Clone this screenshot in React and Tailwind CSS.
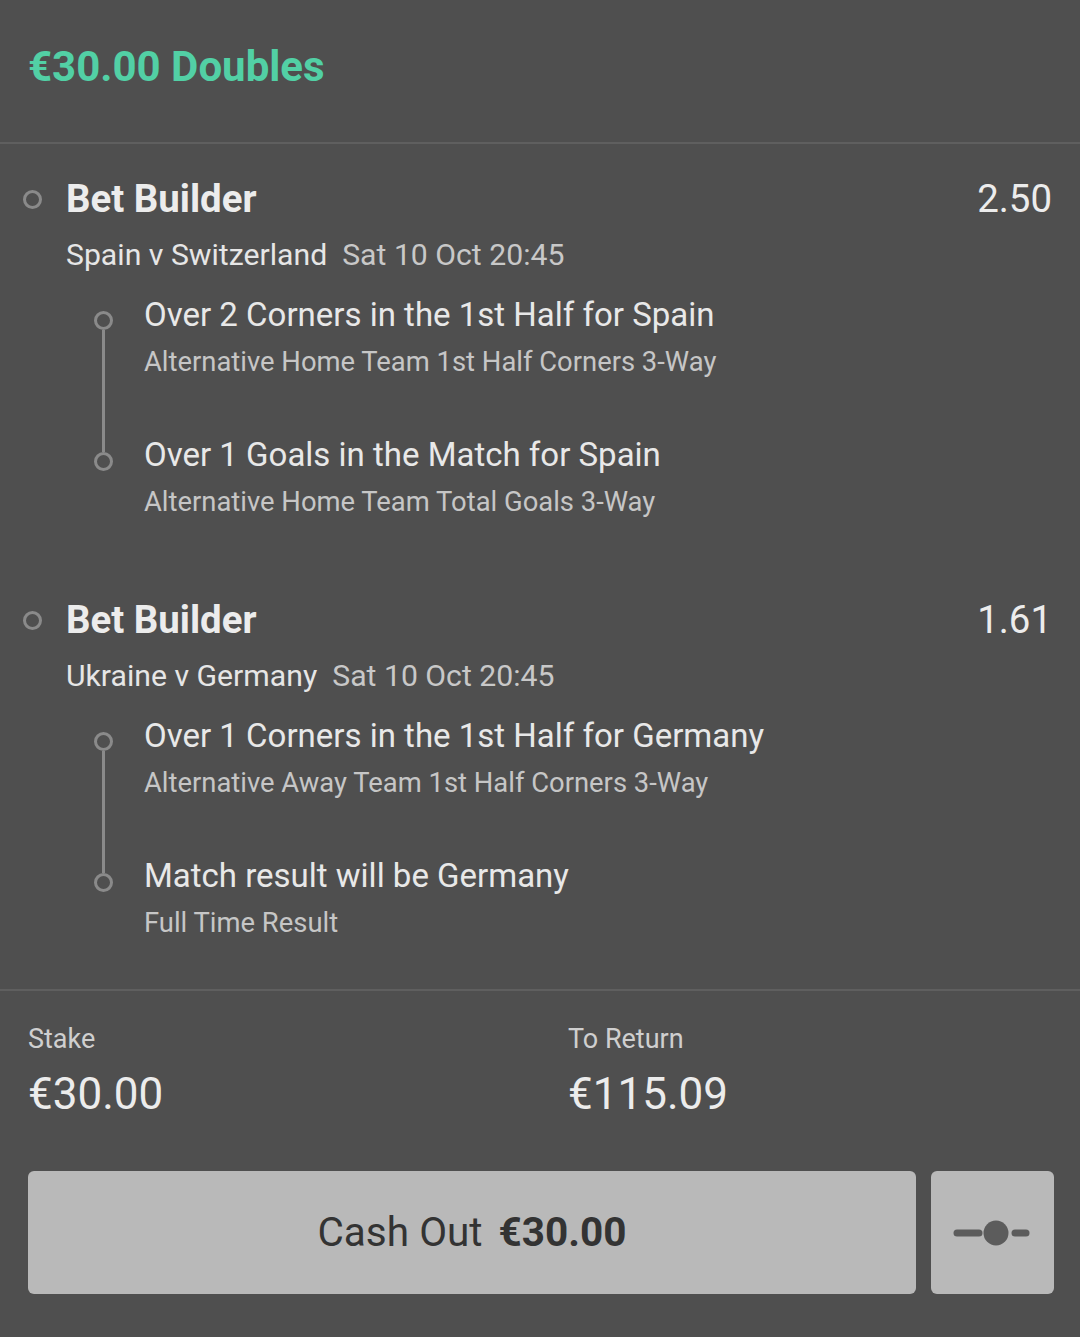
import React from "react";

const Leg = ({ title, sub, first }) => (
  <div className="flex">
    <div className="flex w-[18px] shrink-0 flex-col items-center">
      {first ? (
        <div className="h-[17px]" />
      ) : (
        <div className="h-[18px] w-[3px] bg-[#8a8a8a]" />
      )}
      <div className="h-[19px] w-[19px] shrink-0 rounded-full border-[3px] border-[#8a8a8a]" />
      {first ? <div className="w-[3px] flex-1 bg-[#8a8a8a]" /> : null}
    </div>
    <div className={`ml-[32px] flex flex-col ${first ? "pb-[54px]" : ""}`}>
      <div className="text-[33px] leading-[42px] text-[#e8e8e8]">{title}</div>
      <div className="mt-[8px] text-[27.4px] leading-[36px] text-[#c6c6c6]">{sub}</div>
    </div>
  </div>
);

const Bet = ({ odds, match, date, legs, className }) => (
  <div className={className}>
    <div className="flex items-center pl-[23px] pr-[28px]">
      <div className="h-[19px] w-[19px] shrink-0 rounded-full border-[3px] border-[#8a8a8a]" />
      <div className="ml-[24px] flex-1 text-[38.4px] font-bold leading-[48px] text-[#ececec]">
        Bet Builder
      </div>
      <div className="text-[38.4px] leading-[48px] text-[#ececec]">{odds}</div>
    </div>
    <div className="mt-[12px] flex pl-[66px] text-[30.2px] leading-[40px]">
      <span className="text-[#e6e6e6]">{match}</span>
      <span className="ml-[15px] text-[#c8c8c8]">{date}</span>
    </div>
    <div className="mt-[19px] pl-[94px]">
      <Leg title={legs[0][0]} sub={legs[0][1]} first />
      <Leg title={legs[1][0]} sub={legs[1][1]} />
    </div>
  </div>
);

export default function App() {
  return (
    <div
      className="min-h-[1337px] w-[1080px] bg-[#4f4f4f]"
      style={{ fontFamily: "Roboto, 'Noto Sans', Arial, sans-serif" }}
    >
      <div className="flex h-[144px] items-center border-b-2 border-[#5f5f5f] pb-[8px] pl-[28px]">
        <div className="text-[42px] font-bold leading-[48px] text-[#52d0a5]">
          €30.00 Doubles
        </div>
      </div>

      <Bet
        className="pt-[31px]"
        odds="2.50"
        match="Spain v Switzerland"
        date="Sat 10 Oct 20:45"
        legs={[
          ["Over 2 Corners in the 1st Half for Spain", "Alternative Home Team 1st Half Corners 3-Way"],
          ["Over 1 Goals in the Match for Spain", "Alternative Home Team Total Goals 3-Way"],
        ]}
      />
      <Bet
        className="pt-[76px] pb-[48px]"
        odds="1.61"
        match="Ukraine v Germany"
        date="Sat 10 Oct 20:45"
        legs={[
          ["Over 1 Corners in the 1st Half for Germany", "Alternative Away Team 1st Half Corners 3-Way"],
          ["Match result will be Germany", "Full Time Result"],
        ]}
      />

      <div className="border-t-2 border-[#5f5f5f] pt-[31px]">
        <div className="grid grid-cols-2">
          <div className="pl-[28px]">
            <div className="text-[27px] leading-[34px] text-[#cfcfcf]">Stake</div>
            <div className="mt-[12px] text-[44px] leading-[52px] text-[#ececec]">€30.00</div>
          </div>
          <div className="pl-[28px]">
            <div className="text-[27px] leading-[34px] text-[#cfcfcf]">To Return</div>
            <div className="mt-[12px] text-[44px] leading-[52px] text-[#ececec]">€115.09</div>
          </div>
        </div>
        <div className="mt-[51px] flex gap-[15px] pl-[28px] pr-[26px] pb-[44px]">
          <div className="flex h-[123px] flex-1 items-center justify-center rounded-[6px] bg-[#b9b9b9] text-[40.5px] text-[#333333]">
            <span>Cash Out</span>
            <span className="ml-[16px] font-bold">€30.00</span>
          </div>
          <div className="flex h-[123px] w-[123px] items-center justify-center rounded-[6px] bg-[#b9b9b9]">
            <svg width="80" height="30" viewBox="0 0 80 30">
              <line x1="4" y1="15" x2="26" y2="15" stroke="#5c5c5c" strokeWidth="7" strokeLinecap="round" />
              <circle cx="43" cy="15" r="12.5" fill="#5c5c5c" />
              <line x1="62" y1="15" x2="73" y2="15" stroke="#5c5c5c" strokeWidth="7" strokeLinecap="round" />
            </svg>
          </div>
        </div>
      </div>
    </div>
  );
}
